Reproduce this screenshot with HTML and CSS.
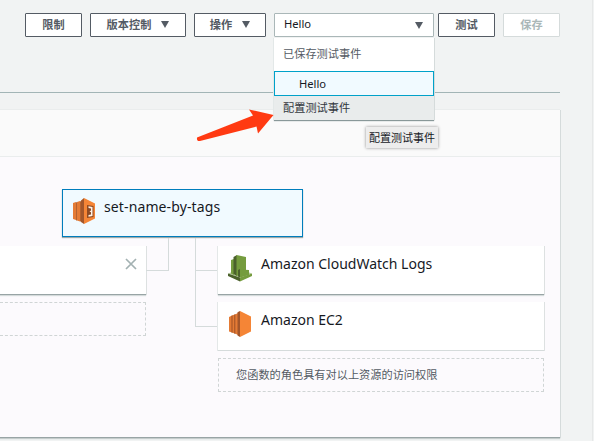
FILE: index.html
```html
<!DOCTYPE html>
<html lang="zh-CN">
<head>
<meta charset="utf-8">
<title>set-name-by-tags</title>
<link rel="stylesheet" href="styles.css">
</head>
<body>
<main class="page">
  <header class="toolbar">
    <button class="btn">限制</button>
    <button class="btn btn-version">版本控制<i class="caret"></i></button>
    <button class="btn btn-actions">操作<i class="caret"></i></button>
    <div class="select">
      <div class="select-value"><span>Hello</span><i class="caret"></i></div>
      <div class="menu">
        <div class="menu-group">已保存测试事件</div>
        <div class="menu-item selected">Hello</div>
        <div class="menu-item hovered">配置测试事件</div>
      </div>
      <div class="tooltip">配置测试事件</div>
      <svg class="arrow" width="80" height="36" viewBox="0 0 80 36"><path d="M2 28.500L58 6.500L54 .5L78.500 6L63 24.500L61.500 17.500L5 32Q1.500 32.500 2 28.500Z" fill="#ff3a12"/></svg>
    </div>
    <button class="btn btn-test">测试</button>
    <button class="btn btn-save" disabled>保存</button>
  </header>
  <section class="panel">
    <div class="panel-head"></div>
    <div class="designer">
      <div class="node">
        <svg class="icon" width="22" height="27" viewBox="0 0 22 27"><path d="M0 5L3 4V22L0 21ZM4 4L7 3V23.500L4 22.500Z" fill="#e47b35"/><path d="M3 4.500L4 4V22.500H3ZM7 3.500L8 3V23.500H7Z" fill="#b5622f"/><path d="M8 2.500L11 0V26L8 24Z" fill="#a3562a"/><path d="M11 0L22 5.500V20.500L11 26Z" fill="#f58536"/><path d="M14 7L20.500 8V19L14 20Z" fill="#8f4a22"/><path d="M15.500 8.300L19.500 9V18L15.500 18.800V17L18 16.500V14.300L16.500 13.500L18 12.500V10.500L15.500 10Z" fill="#fff1e6"/></svg>
        <span>set-name-by-tags</span>
      </div>
      <div class="columns">
        <div class="left">
          <div class="card trigger"><svg width="12" height="12" viewBox="0 0 12 12"><path d="M1 1L11 11M11 1L1 11" stroke="#a3b1b2" stroke-width="1.700" fill="none"/></svg></div>
          <div class="hint"></div>
        </div>
        <div class="links">
          <div class="link-in"></div>
          <div class="trunk"><div class="link-first"></div><div class="link-second"></div></div>
        </div>
        <div class="right">
          <div class="card">
            <svg class="icon cloudwatch" width="24" height="27" viewBox="0 0 24 27"><path d="M0 18.500L12 14L24 18.500L12 22.500Z" fill="#b7ca9d"/><path d="M0 18.500L12 22.500V26.500L0 21Z" fill="#4b612c"/><path d="M24 18.500L12 22.500V26.500L24 21Z" fill="#759c3e"/><path d="M3 5L6 4V20L3 18.500Z" fill="#759c3e"/><path d="M5.500 2L9 0V21L5.500 19Z" fill="#4b612c"/><path d="M8.500 0L18 2V19L8.500 21Z" fill="#759c3e"/><path d="M10 15L12 14V22.500L10 21.500Z" fill="#4b612c"/><path d="M12 14.500L21 15V20L12 22.500Z" fill="#759c3e"/></svg>
            <span>Amazon CloudWatch Logs</span>
          </div>
          <div class="card plain">
            <svg class="icon" width="22" height="27" viewBox="0 0 22 27"><path d="M0 6L3 4.500V21.500L0 20.500ZM3 4.500L7 3V23L3 21.500ZM7 3L9 2V24L7 23Z" fill="#e47b35"/><path d="M2.500 4.800L3.500 4.300V22L2.500 21.500ZM5.300 3.800L6.300 3V23L5.300 22.500Z" fill="#9d5025"/><path d="M8.500 1.200L11 0V26L8.500 24.500Z" fill="#a3562a"/><path d="M11 0L22 5.500V20.500L11 26Z" fill="#f58536"/></svg>
            <span>Amazon EC2</span>
          </div>
          <div class="hint">您函数的角色具有对以上资源的访问权限</div>
        </div>
      </div>
    </div>
  </section>
</main>
</body>
</html>
```
FILE: styles.css
```css
* { box-sizing: border-box; }
body {
  margin: 0;
  background: #f1f3f3;
  color: #16191f;
  font-family: "Noto Sans", "Noto Sans CJK SC", sans-serif;
  font-size: 11.2px;
}
svg { display: block; flex: none; }
.page {
  width: 593px;
  height: 441px;
  border-right: 1px solid #e6e8e8;
  overflow: hidden;
}
.toolbar {
  display: flex;
  align-items: flex-start;
  width: 560px;
  height: 93px;
  padding: 13px 0 0 25px;
  border-bottom: 1px solid #a2b5b6;
}
.btn {
  display: flex;
  align-items: center;
  justify-content: center;
  flex: none;
  width: 57px;
  height: 24px;
  margin: 0 8px 0 0;
  padding: 0 0 1px;
  border: 1px solid #545b64;
  border-radius: 1px;
  background: #fff;
  color: #545b64;
  font: 700 11.2px/21px "Noto Sans CJK SC", sans-serif;
}
.btn-version { width: 96px; }
.btn-actions { width: 72px; }
.btn-test { margin-left: 4px; }
.btn-save { margin: 0; border-color: #d5dbdb; color: #aab7b8; }
.caret {
  width: 0;
  border: 4px solid transparent;
  border-top: 7px solid #545b64;
  border-bottom: 0;
}
.btn .caret { margin-left: 10px; }
.select { position: relative; flex: none; width: 160px; height: 24px; }
.select-value {
  display: flex;
  align-items: center;
  justify-content: space-between;
  height: 24px;
  padding: 0 10px 0 9px;
  border: 1px solid #aab7b8;
  border-radius: 1px;
  background: #fff;
}
.select-value span { line-height: 20px; padding-bottom: 2px; }
.menu {
  position: absolute;
  z-index: 2;
  top: 25px;
  left: 0;
  width: 160px;
  background: #fff;
  box-shadow: 1px 0 0 #d5dbdb, -1px 0 0 #e3e8e8, 0 1px 1px #899899;
}
.menu-group { height: 33px; padding-left: 9px; line-height: 31px; color: #545b64; }
.menu-item { height: 24px; padding-left: 9px; }
.menu-item.selected { height: 25px; padding-left: 24px; line-height: 23px; border: 1px solid #00a1c9; background: #f1faff; }
.menu-item.hovered { background: #e9ecec; color: #33383e; line-height: 24px; }
.tooltip {
  position: absolute;
  z-index: 3;
  top: 114px;
  left: 92px;
  width: 72px;
  height: 21px;
  background: #ededed;
  box-shadow: 0 0 3px #8e8e8e;
  color: #16191f;
  font-size: 11px;
  line-height: 22px;
  text-align: center;
  white-space: nowrap;
}
.arrow { position: absolute; z-index: 4; top: 96px; left: -79px; }
.panel {
  width: 560px;
  height: 328px;
  margin-top: 17px;
  background: #fcfafd;
  box-shadow: 1px 0 0 #d5dbdb, 0 -1px 0 #eaeded, 0 1px 1px #c5cccc;
  border-bottom: 1px solid #98a4a5;
}
.panel-head { height: 47px; background: #fafafa; border-bottom: 1px solid #eaeded; }
.designer { padding-top: 32px; }
.node {
  display: flex;
  width: 241px;
  height: 48px;
  margin-left: 62px;
  padding: 8px 10px;
  border: 1px solid #007dbc;
  background: #f1faff;
  box-shadow: 0 1px 1px #9ca9aa;
}
.node span, .card span {
  margin-left: 10px;
  font-size: 14px;
  line-height: 17px;
  white-space: nowrap;
}
.node span { margin-left: 9px; letter-spacing: .12px; }
.columns { display: flex; }
.left { width: 146px; padding-top: 9px; }
.right { width: 326px; padding-top: 9px; }
.card {
  display: flex;
  height: 49px;
  padding: 9px 11px;
  background: #fff;
  border-bottom: 1px solid #98a4a5;
  box-shadow: 1px 0 0 #dde1e1, -1px 0 0 #e4e8e8, 0 1px 1px #d5dbdb;
}
.card.plain { border-color: #d5dbdb; box-shadow: 1px 0 0 #dde1e1, -1px 0 0 #e4e8e8; }
.card + .card { margin-top: 7px; }
.cloudwatch { margin: 0 -1px; }
.trigger { justify-content: flex-end; padding: 12px 9px; }
.hint {
  height: 34px;
  margin-top: 7px;
  padding-left: 17px;
  border: 1px dashed #d0d5d5;
  color: #545b64;
  line-height: 32px;
}
.left .hint { border-left: 0; }
.links { display: flex; width: 72px; padding-top: 1px; }
.link-in { width: 23px; height: 33px; border: solid #d5dbdb; border-width: 0 1px 1px 0; }
.trunk { width: 23px; height: 89px; margin-left: 26px; border-left: 1px solid #d5dbdb; }
.link-first { height: 33px; border-bottom: 1px solid #d5dbdb; }
.link-second { height: 56px; border-bottom: 1px solid #d5dbdb; }
```
